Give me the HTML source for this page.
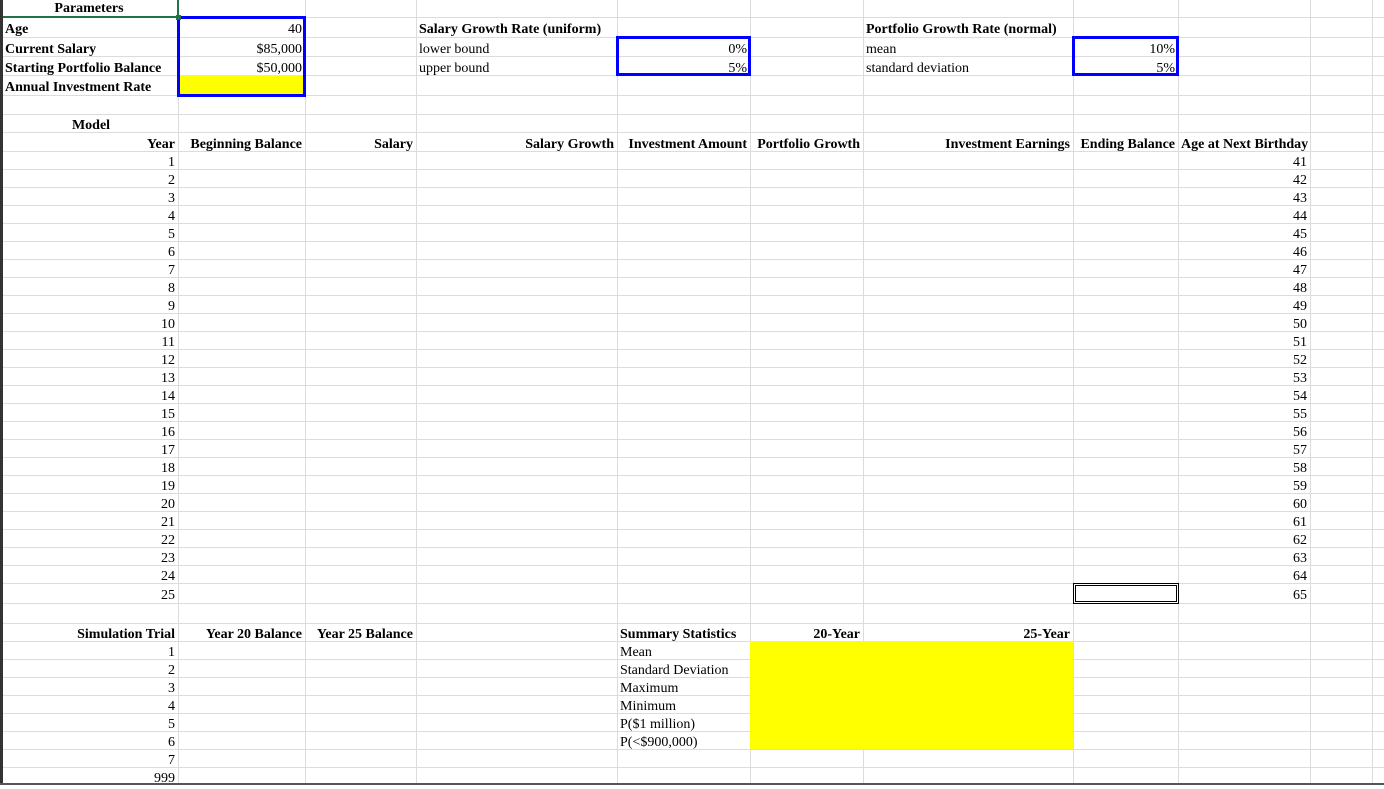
<!DOCTYPE html>
<html><head><meta charset="utf-8"><style>
body{margin:0;width:1384px;height:785px;overflow:hidden;background:#fff;position:relative;font-family:"Liberation Serif",serif;font-size:14px;color:#000}
.v{position:absolute;top:0;width:1px;height:785px;background:#dcdcdc}
.h{position:absolute;left:0;height:1px;width:1384px;background:#dcdcdc}
.c{position:absolute;white-space:nowrap;overflow:visible;box-sizing:border-box;padding:2px 3px 0 3px}
.b{font-weight:bold}
.r{text-align:right}.m{text-align:center}
</style></head><body>
<div class="v" style="left:178px"></div><div class="v" style="left:305px"></div><div class="v" style="left:416px"></div><div class="v" style="left:617px"></div><div class="v" style="left:750px"></div><div class="v" style="left:863px"></div><div class="v" style="left:1073px"></div><div class="v" style="left:1178px"></div><div class="v" style="left:1310px"></div><div class="v" style="left:1372px"></div>
<div id="hl"></div>
<script>
var ys=[17,37,56,75,95,114,132,151];for(var y=169;y<=583;y+=18)ys.push(y);ys=ys.concat([603,623,641,659,677,695,713,731,749,767]);
var s='';ys.forEach(function(y){s+='<div class="h" style="top:'+y+'px"></div>'});
function cell(x,w,t,h,txt,cls){return '<div class="c '+cls+'" style="left:'+x+'px;width:'+w+'px;top:'+t+'px;height:'+h+'px;line-height:'+(h+2)+'px">'+txt+'</div>'}
for(var i=1;i<=25;i++){var t=151+(i-1)*18;s+=cell(0,178,t,i==25?20:18,i,'r');s+=cell(1178,132,t,i==25?20:18,40+i,'r');}
var tr=['1','2','3','4','5','6','7','999'];tr.forEach(function(v,k){s+=cell(0,178,641+k*18,18,v,'r')});
var st=['Mean','Standard Deviation','Maximum','Minimum','P($1 million)','P(&lt;$900,000)'];st.forEach(function(v,k){s+=cell(617,200,641+k*18,18,v,'')});
document.getElementById('hl').innerHTML=s;
</script>
<div style="position:absolute;left:178px;top:75px;width:127px;height:20px;background:#ffff00"></div>
<div style="position:absolute;left:750px;top:641px;width:323px;height:108px;background:#ffff00"></div>
<div class="c b m" style="left:0;width:178px;top:-2px;height:17px;line-height:17px">Parameters</div>
<div class="c b" style="left:2px;width:178px;top:17px;height:20px;line-height:21px">Age</div>
<div class="c b" style="left:2px;width:178px;top:37px;height:19px;line-height:21px">Current Salary</div>
<div class="c b" style="left:2px;width:178px;top:56px;height:19px;line-height:21px">Starting Portfolio Balance</div>
<div class="c b" style="left:2px;width:178px;top:75px;height:20px;line-height:22px">Annual Investment Rate</div>
<div class="c r" style="left:178px;width:127px;top:17px;height:20px;line-height:21px">40</div>
<div class="c r" style="left:178px;width:127px;top:37px;height:19px;line-height:21px">$85,000</div>
<div class="c r" style="left:178px;width:127px;top:56px;height:19px;line-height:21px">$50,000</div>
<div class="c b" style="left:416px;top:17px;height:20px;line-height:21px">Salary Growth Rate (uniform)</div>
<div class="c" style="left:416px;top:37px;height:19px;line-height:21px">lower bound</div>
<div class="c" style="left:416px;top:56px;height:19px;line-height:21px">upper bound</div>
<div class="c r" style="left:617px;width:133px;top:37px;height:19px;line-height:21px">0%</div>
<div class="c r" style="left:617px;width:133px;top:56px;height:19px;line-height:21px">5%</div>
<div class="c b" style="left:863px;top:17px;height:20px;line-height:21px">Portfolio Growth Rate (normal)</div>
<div class="c" style="left:863px;top:37px;height:19px;line-height:21px">mean</div>
<div class="c" style="left:863px;top:56px;height:19px;line-height:21px">standard deviation</div>
<div class="c r" style="left:1073px;width:105px;top:37px;height:19px;line-height:21px">10%</div>
<div class="c r" style="left:1073px;width:105px;top:56px;height:19px;line-height:21px">5%</div>
<div class="c b m" style="left:0;width:182px;top:114px;height:18px;line-height:20px">Model</div>
<div class="c b r" style="left:0;width:178px;top:132px;height:19px;line-height:21px">Year</div>
<div class="c b r" style="left:178px;width:127px;top:132px;height:19px;line-height:21px">Beginning Balance</div>
<div class="c b r" style="left:305px;width:111px;top:132px;height:19px;line-height:21px">Salary</div>
<div class="c b r" style="left:416px;width:201px;top:132px;height:19px;line-height:21px">Salary Growth</div>
<div class="c b r" style="left:617px;width:133px;top:132px;height:19px;line-height:21px">Investment Amount</div>
<div class="c b r" style="left:750px;width:113px;top:132px;height:19px;line-height:21px">Portfolio Growth</div>
<div class="c b r" style="left:863px;width:210px;top:132px;height:19px;line-height:21px">Investment Earnings</div>
<div class="c b r" style="left:1073px;width:105px;top:132px;height:19px;line-height:21px">Ending Balance</div>
<div class="c b r" style="left:1178px;width:132px;top:132px;height:19px;line-height:21px">Age at Next Birthday</div>
<div class="c b r" style="left:0;width:178px;top:623px;height:18px;line-height:20px">Simulation Trial</div>
<div class="c b r" style="left:178px;width:127px;top:623px;height:18px;line-height:20px">Year 20 Balance</div>
<div class="c b r" style="left:305px;width:111px;top:623px;height:18px;line-height:20px">Year 25 Balance</div>
<div class="c b" style="left:617px;top:623px;height:18px;line-height:20px">Summary Statistics</div>
<div class="c b r" style="left:750px;width:113px;top:623px;height:18px;line-height:20px">20-Year</div>
<div class="c b r" style="left:863px;width:210px;top:623px;height:18px;line-height:20px">25-Year</div>
<div style="position:absolute;left:177px;top:16px;width:123px;height:75px;border:3px solid #0000ff"></div>
<div style="position:absolute;left:616px;top:36px;width:129px;height:34px;border:3px solid #0000ff"></div>
<div style="position:absolute;left:1072px;top:36px;width:101px;height:34px;border:3px solid #0000ff"></div>
<div style="position:absolute;left:1073px;top:583px;width:100px;height:15px;border:3px double #000"></div>
<div style="position:absolute;left:0;top:0;width:177px;height:16px;border-right:2px solid #217346;border-bottom:2px solid #217346"></div>
<div style="position:absolute;left:176px;top:15px;width:5px;height:5px;background:#217346"></div>
<div style="position:absolute;left:0;top:0;width:3px;height:785px;background:#333"></div>
<div style="position:absolute;left:0;top:783px;width:1384px;height:2px;background:#555"></div>
</body></html>
